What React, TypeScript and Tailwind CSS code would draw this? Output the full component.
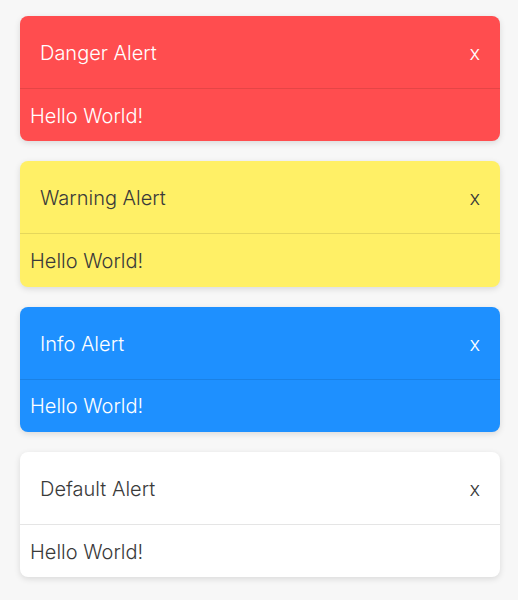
import React from "react";

type Tone = "danger" | "warning" | "info" | "default";

const tones: Record<Tone, { box: string; rule: string }> = {
  danger: { box: "bg-[#ff4d4f] text-white", rule: "border-black/10" },
  warning: { box: "bg-[#fff066] text-[#3a3a3a]", rule: "border-black/10" },
  info: { box: "bg-[#1e90ff] text-white", rule: "border-black/10" },
  default: { box: "bg-white text-[#3a3a3a]", rule: "border-[#e5e5e5]" },
};

function Alert({ tone, title }: { tone: Tone; title: string }) {
  const t = tones[tone];
  return (
    <div className={`w-[480px] rounded-lg shadow-[0_2px_6px_rgba(0,0,0,0.12)] overflow-hidden ${t.box}`}>
      <div className={`h-[73px] flex items-center justify-between pl-5 pr-5 pt-[2px] border-b ${t.rule}`}>
        <span className="text-[20px] font-light">{title}</span>
        <span className="text-[20px] font-light">x</span>
      </div>
      <div className="h-[52.3px] flex items-center px-[10px] pt-[1px]">
        <span className="text-[20px] font-light">Hello World!</span>
      </div>
    </div>
  );
}

export default function App() {
  return (
    <div
      className="min-h-[600px] bg-[#f7f7f7] pl-5 pt-4 pb-6 flex flex-col gap-5"
      style={{ fontFamily: "Inter, 'Noto Sans', sans-serif" }}
    >
      <Alert tone="danger" title="Danger Alert" />
      <Alert tone="warning" title="Warning Alert" />
      <Alert tone="info" title="Info Alert" />
      <Alert tone="default" title="Default Alert" />
    </div>
  );
}
